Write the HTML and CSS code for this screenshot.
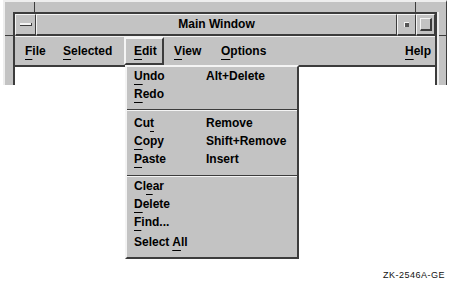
FILE: index.html
```html
<!DOCTYPE html>
<html>
<head>
<meta charset="utf-8">
<title>Main Window</title>
<link rel="stylesheet" href="styles.css">
</head>
<body>
<div class="screen">
  <div class="frame">
    <div class="frame-top">
      <div class="ft-left"></div>
      <div class="ft-mid"></div>
      <div class="ft-right"></div>
    </div>
    <div class="frame-body">
      <div class="side side-left"><div class="side-corner"></div></div>
      <div class="win">
        <div class="titlebar">
          <div class="tb-btn winmenu"><span class="winmenu-bar"></span></div>
          <div class="title">Main Window</div>
          <div class="tb-btn minimize"><span class="min-dot"></span></div>
          <div class="tb-btn maximize"><span class="max-box"></span></div>
        </div>
        <div class="menubar">
          <div class="mb-item mb-file"><span class="mn">F</span>ile</div>
          <div class="mb-item mb-sel"><span class="mn">S</span>elected</div>
          <div class="mb-item mb-edit"><span class="mn">E</span>dit</div>
          <div class="mb-item mb-view"><span class="mn">V</span>iew</div>
          <div class="mb-item mb-opt"><span class="mn">O</span>ptions</div>
          <div class="mb-item mb-help"><span class="mn">H</span>elp</div>
        </div>
        <div class="client"></div>
      </div>
      <div class="side side-right"><div class="side-corner"></div></div>
    </div>
  </div>
  <div class="caption">ZK-2546A-GE</div>

  <div class="pulldown">
    <div class="pd-item"><span><span class="mn">U</span>ndo</span><span>Alt+Delete</span></div>
    <div class="pd-item"><span><span class="mn">R</span>edo</span><span></span></div>
    <div class="pd-sep"></div>
    <div class="pd-item"><span>Cu<span class="mn">t</span></span><span>Remove</span></div>
    <div class="pd-item"><span><span class="mn">C</span>opy</span><span>Shift+Remove</span></div>
    <div class="pd-item"><span><span class="mn">P</span>aste</span><span>Insert</span></div>
    <div class="pd-sep pd-sep-2"></div>
    <div class="pd-item"><span>Cl<span class="mn">e</span>ar</span><span></span></div>
    <div class="pd-item"><span><span class="mn">D</span>elete</span><span></span></div>
    <div class="pd-item"><span><span class="mn">F</span>ind...</span><span></span></div>
    <div class="pd-item pd-last"><span>Select <span class="mn">A</span>ll</span><span></span></div>
  </div>
</div>
</body>
</html>
```

FILE: styles.css
```css
* { box-sizing: border-box; }

html, body {
  margin: 0;
  padding: 0;
  background: #ffffff;
}

body {
  font-family: "Liberation Sans", Arial, sans-serif;
  font-weight: bold;
  font-size: 12px;
  color: #000;
}

.screen {
  position: relative;
  width: 450px;
  height: 283px;
  overflow: hidden;
  display: flex;
  flex-direction: column;
}

/* ---------- window frame ---------- */
.frame {
  margin-left: 3px;
  width: 444px;
  height: 85px;
  background: #c3c3c3;
  border-top: 2px solid #eeeeee;
  border-left: 2px solid #eeeeee;
  border-right: 1px solid #3c3c3c;
  display: flex;
  flex-direction: column;
}

.frame-top {
  height: 10px;
  display: flex;
  flex: none;
}
.ft-left {
  width: 30px;
  border-right: 1px solid #3c3c3c;
}
.ft-mid { flex: 1; }
.ft-right {
  width: 31px;
  border-left: 1px solid #3c3c3c;
}

.frame-body {
  flex: 1;
  display: flex;
  min-height: 0;
}

.side { flex: none; }
.side-left { width: 8px; }
.side-right {
  width: 9px;
  border-left: 2px solid #eeeeee;
}
.side-corner {
  height: 24px;
  border-bottom: 1px solid #3c3c3c;
}

.win {
  width: 424px;
  flex: none;
  border-top: 2px solid #3c3c3c;
  border-left: 2px solid #3c3c3c;
  border-right: 2px solid #3c3c3c;
  display: flex;
  flex-direction: column;
}

/* ---------- title bar ---------- */
.titlebar {
  height: 22px;
  display: flex;
  flex: none;
}
.tb-btn {
  display: flex;
  align-items: center;
  justify-content: center;
  border-top: 1px solid #f4f4f4;
  border-left: 1px solid #f4f4f4;
  border-bottom: 2px solid #3c3c3c;
  border-right: 1px solid #3c3c3c;
}
.winmenu { width: 21px; }
.winmenu-bar {
  width: 12px;
  height: 3px;
  background: #f4f4f4;
  border-bottom: 1px solid #3c3c3c;
  border-right: 1px solid #3c3c3c;
}
.title {
  flex: 1;
  text-align: center;
  line-height: 18px;
  border-top: 1px solid #f4f4f4;
  border-left: 1px solid #f4f4f4;
  border-bottom: 2px solid #3c3c3c;
  border-right: 1px solid #3c3c3c;
}
.minimize { width: 19px; }
.min-dot {
  width: 5px;
  height: 5px;
  background: #555555;
  border-top: 1px solid #f4f4f4;
  border-left: 1px solid #f4f4f4;
}
.maximize { width: 19px; }
.max-box {
  width: 12px;
  height: 13px;
  border-top: 1px solid #f4f4f4;
  border-left: 1px solid #f4f4f4;
  border-bottom: 2px solid #3c3c3c;
  border-right: 2px solid #3c3c3c;
}

/* ---------- menu bar ---------- */
.menubar {
  height: 31px;
  flex: none;
  display: flex;
  border-top: 1px solid #f4f4f4;
  border-bottom: 2px solid #3c3c3c;
}
.mb-item {
  height: 28px;
  display: flex;
  align-items: center;
  line-height: 14px;
  padding-left: 8px;
  border: 2px solid transparent;
  white-space: nowrap;
}
.mb-file { width: 38px; }
.mb-sel { width: 71px; }
.mb-edit {
  width: 40px;
  margin-left: 0;
  border-top-color: #f4f4f4;
  border-left-color: #f4f4f4;
  border-bottom-color: #3c3c3c;
  border-right-color: #3c3c3c;
}
.mb-view { width: 47px; }
.mb-opt { width: 60px; }
.mb-help {
  margin-left: auto;
  width: 40px;
}

.mn {
  text-decoration: underline;
  text-decoration-thickness: 1px;
  text-underline-offset: 4px;
}

.client {
  flex: 1;
  background: #ffffff;
}

/* ---------- caption ---------- */
.caption {
  margin-top: auto;
  margin-bottom: 2px;
  align-self: flex-end;
  margin-right: 5px;
  font-weight: normal;
  font-size: 9px;
  line-height: 11px;
  letter-spacing: 0.5px;
  color: #111;
}

/* ---------- pulldown menu ---------- */
.pulldown {
  position: absolute;
  left: 125px;
  top: 65px;
  width: 174px;
  background: #c3c3c3;
  border-top: 2px solid #f4f4f4;
  border-left: 2px solid #f4f4f4;
  border-right: 2px solid #3c3c3c;
  border-bottom: 2px solid #3c3c3c;
  padding: 0 0 6px 7px;
}
.pd-item {
  height: 18px;
  display: grid;
  grid-template-columns: 72px 1fr;
  align-items: center;
  line-height: 14px;
  white-space: nowrap;
}
.pd-sep {
  margin: 6px 0 3px -7px;
  border-top: 1px solid #3c3c3c;
  border-bottom: 1px solid #f4f4f4;
}
.pd-sep-2 {
  margin-top: 7px;
  margin-bottom: 0;
}
.pd-last { margin-top: 2px; }
```
